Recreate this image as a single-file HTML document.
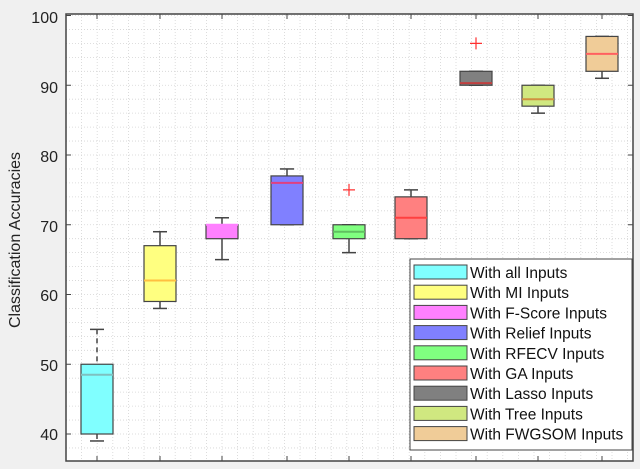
<!DOCTYPE html><html><head><style>body{margin:0;background:#f0f0f0}svg{display:block}text{font-family:"Liberation Sans",sans-serif}</style></head><body>
<svg width="640" height="469" viewBox="0 0 640 469" xmlns="http://www.w3.org/2000/svg">
<rect width="640" height="469" fill="#f0f0f0"/>
<rect x="66" y="14" width="567" height="447" fill="#fff"/>
<g id="grid" stroke="#d4d4d4" stroke-width="0.8" stroke-dasharray="1,2"></g>
<g id="boxes"></g>
<g stroke="#444" stroke-width="1.5" fill="none"><path d="M66 14V461H633V14Z"/></g>
<g font-size="16" fill="#222" text-anchor="end">
<text x="58" y="23">100</text><text x="58" y="93">90</text><text x="58" y="162">80</text><text x="58" y="232">70</text><text x="58" y="301">60</text><text x="58" y="371">50</text><text x="58" y="440">40</text></g>
<text transform="translate(20,240) rotate(-90)" font-size="16" fill="#222" text-anchor="middle">Classification Accuracies</text>
<rect x="410" y="259" width="222" height="191" fill="#fff" stroke="#444"/>
<g id="leg" font-size="15.5" fill="#111"></g>
</svg>
<script>
const Y=v=>434-(v-40)*6.975,ns="http://www.w3.org/2000/svg";
function el(p,t,a){const e=document.createElementNS(ns,t);for(const k in a)e.setAttribute(k,a[k]);document.getElementById(p).appendChild(e);return e;}
for(let v=38;v<=100;v+=2){el('grid','line',{x1:66,x2:633,y1:Y(v),y2:Y(v)});}
const xs=[97,160,222,287,349,411,476,538,602];
for(let x=66+15.6;x<633;x+=15.6)el('grid','line',{x1:x,x2:x,y1:14,y2:461});
xs.forEach(x=>{el('boxes','line',{x1:x,x2:x,y1:14,y2:19,stroke:'#444'});el('boxes','line',{x1:x,x2:x,y1:456,y2:461,stroke:'#444'});});
[40,50,60,70,80,90,100].forEach(v=>{el('boxes','line',{x1:66,x2:71,y1:Y(v),y2:Y(v),stroke:'#444'});el('boxes','line',{x1:628,x2:633,y1:Y(v),y2:Y(v),stroke:'#444'});});
const d=[["#80ffff","#7fc0c0",40,50,48.5,39,55,null,1],["#ffff80","#ffbf40",59,67,62,58,69,null],["#ff80ff","#ff80ff",68,70,70,65,71,null],["#8080ff","#e04080",70,77,76,70,78,null],["#80ff80","#60c060",68,70,69,66,70,75],["#ff8080","#ff4040",68,74,71,68,75,null],["#808080","#c04040",90,92,90.3,90,92,96],["#d0e880","#d09040",87,90,88,86,90,null],["#f0cc98","#ff6060",92,97,94.5,91,97,null]];
d.forEach((b,i)=>{const x=xs[i],w=16;
 const dash=b[8]?'5,4':'none';
 if(b[6]>b[3])el('boxes','line',{x1:x,x2:x,y1:Y(b[6]),y2:Y(b[3]),stroke:'#444','stroke-width':1.5,'stroke-dasharray':dash});
 if(b[5]<b[2])el('boxes','line',{x1:x,x2:x,y1:Y(b[2]),y2:Y(b[5]),stroke:'#444','stroke-width':1.5,'stroke-dasharray':dash});
 el('boxes','line',{x1:x-7,x2:x+7,y1:Y(b[6]),y2:Y(b[6]),stroke:'#444','stroke-width':1.5});
 el('boxes','line',{x1:x-7,x2:x+7,y1:Y(b[5]),y2:Y(b[5]),stroke:'#444','stroke-width':1.5});
 el('boxes','rect',{x:x-w,y:Y(b[3]),width:2*w,height:Y(b[2])-Y(b[3]),fill:b[0],stroke:'#444','stroke-width':1.2});
 el('boxes','line',{x1:x-w,x2:x+w,y1:Y(b[4]),y2:Y(b[4]),stroke:b[1],'stroke-width':2});
 if(b[7]){const y=Y(b[7]);el('boxes','path',{d:`M${x-6} ${y}H${x+6}M${x} ${y-6}V${y+6}`,stroke:'#ff3030','stroke-width':1.2});}
});
const L=["With all Inputs","With MI Inputs","With F-Score Inputs","With Relief Inputs","With RFECV Inputs","With GA Inputs","With Lasso Inputs","With Tree Inputs","With FWGSOM Inputs"];
L.forEach((t,i)=>{const y=265+i*20.2;el('leg','rect',{x:414,y:y,width:53,height:14,fill:d[i][0],stroke:'#444'});const tx=el('leg','text',{x:470,y:y+13});tx.textContent=t;});
</script>
</body></html>
